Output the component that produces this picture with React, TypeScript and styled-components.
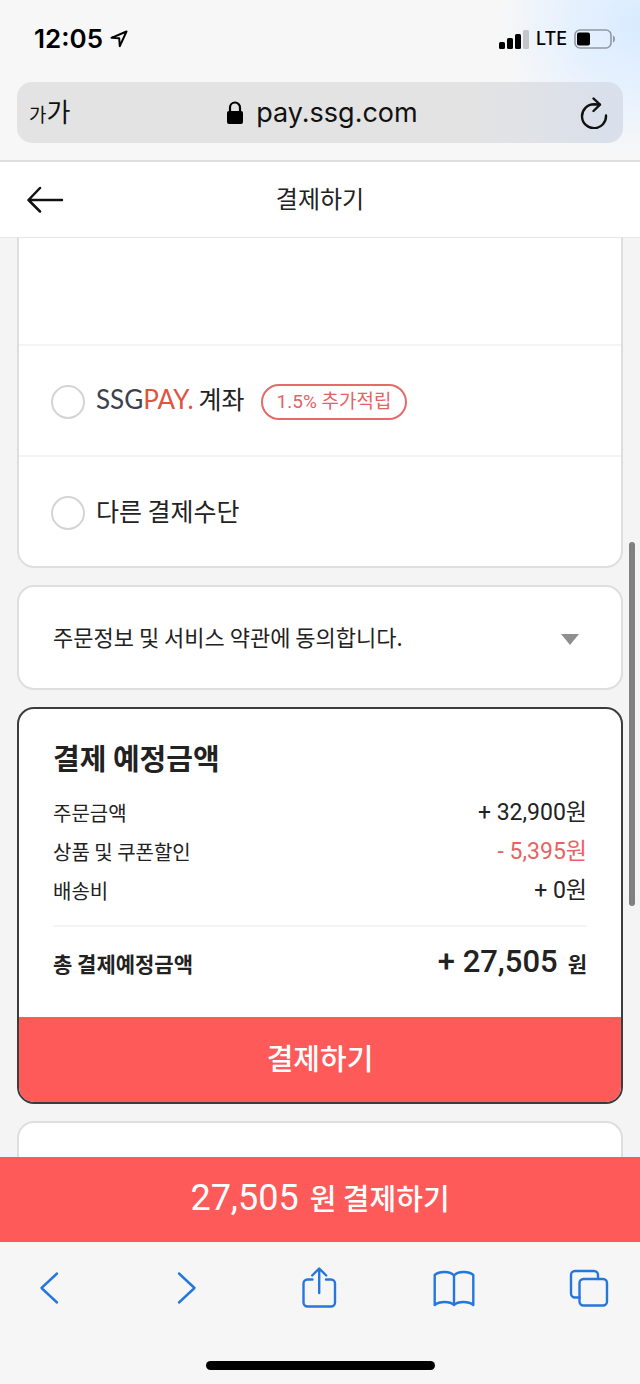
import React from "react";
import styled, { createGlobalStyle } from "styled-components";

const korean = `Roboto, "Noto Sans CJK KR", sans-serif`;
const hangul = `"Noto Sans CJK KR", sans-serif`;
const system = `Inter, "Noto Sans CJK KR", sans-serif`;
const coral = "#ff5a5a";
const ink = "#222";

const GlobalStyle = createGlobalStyle`
  *, *::before, *::after { box-sizing: border-box; }
  body { margin: 0; background: #f4f4f4; }
  button { border: 0; padding: 0; background: none; color: inherit; font: inherit; cursor: pointer; }
  svg { display: block; flex: none; }
  h1, h2, dl, dd, dt, ul { margin: 0; padding: 0; }
`;

const Screen = styled.div`
  min-height: 100vh;
  display: flex;
  flex-direction: column;
  color: ${ink};
  font-family: ${hangul};
`;

const BrowserTop = styled.div`
  display: flex;
  flex-direction: column;
  padding-bottom: 17px;
  border-bottom: 2px solid #dfdfdf;
  background: radial-gradient(ellipse 140px 130px at 100% 24px, #d9ebff 0%, #e6f1fe 50%, #f7f7f7 100%);
`;

const StatusBar = styled.div`
  height: 82px;
  display: flex;
  align-items: center;
  justify-content: space-between;
  padding: 0 24px 4px 34px;
  color: #000;
  font-family: ${system};
`;

const StatusGroup = styled.div`
  display: flex;
  align-items: center;
  gap: 7px;
`;

const Clock = styled.time`
  font-size: 26px;
  font-weight: 600;
  line-height: 30px;
`;

const Network = styled.span`
  font-size: 18px;
  font-weight: 500;
  line-height: 24px;
`;

const AddressBar = styled.div`
  height: 61px;
  margin: 0 17px;
  padding: 0 15px 0 12px;
  display: grid;
  grid-template-columns: 50px 1fr 42px;
  align-items: center;
  border-radius: 15px;
  background: linear-gradient(90deg, #e3e3e3 75%, #d9e0ec 100%);
  color: #111;
  font-family: ${system};
`;

const TextSizeButton = styled.button`
  display: flex;
  align-items: baseline;
  line-height: 32px;
`;

const SizeSample = styled.span<{ $large?: boolean }>`
  font-family: ${hangul};
  font-size: ${(p) => (p.$large ? 26 : 19)}px;
`;

const UrlButton = styled.button`
  display: flex;
  align-items: center;
  justify-content: center;
  gap: 13px;
  font-size: 27px;
  line-height: 34px;
`;

const ReloadButton = styled.button`
  justify-self: end;
`;

const PageHeader = styled.header`
  height: 76px;
  padding: 0 26px 2px;
  display: grid;
  grid-template-columns: 40px 1fr 40px;
  align-items: center;
  background: #fff;
  border-bottom: 1px solid #e6e6e6;
`;

const PageTitle = styled.h1`
  padding-bottom: 2px;
  font-size: 24px;
  font-weight: 400;
  line-height: 36px;
  text-align: center;
`;

const Content = styled.main`
  position: relative;
  flex: 1;
  display: flex;
  flex-direction: column;
  gap: 17px;
  padding: 0 17px;
  background: #f4f4f4;
`;

const Card = styled.section<{ $edge?: "top" | "bottom"; $strong?: boolean }>`
  overflow: hidden;
  background: #fff;
  border: 2px solid ${(p) => (p.$strong ? "#3c3c3c" : "#dedede")};
  border-radius: 17px;
  ${(p) => p.$edge === "top" && "border-top: 0; border-top-left-radius: 0; border-top-right-radius: 0; padding-top: 106px;"}
  ${(p) => p.$edge === "bottom" && "border-bottom: 0; border-bottom-left-radius: 0; border-bottom-right-radius: 0; flex: 1; min-height: 34px;"}
`;

const Method = styled.label`
  height: 111px;
  padding: 2px 32px 0;
  display: flex;
  align-items: center;
  border-top: 2px solid #f4f4f4;
  font-size: 25px;
  line-height: 36px;
  cursor: pointer;
`;

const Radio = styled.input`
  appearance: none;
  width: 34px;
  height: 34px;
  margin: 0 11px 0 0;
  border: 2px solid #d4d4d4;
  border-radius: 50%;
  background: #fff;
  &:checked { border: 10px solid ${coral}; }
`;

const MethodName = styled.span`
  display: flex;
  align-items: baseline;
  gap: 5px;
  padding-bottom: 6px;
`;

const Wordmark = styled.span`
  font-family: Lato, sans-serif;
  font-size: 26px;
  color: #3d404d;
`;

const WordmarkAccent = styled.span`
  color: #dc5540;
`;

const Badge = styled.span`
  height: 36px;
  margin-left: 16px;
  padding: 0 14px;
  display: flex;
  align-items: center;
  border: 2px solid #e56a6a;
  border-radius: 18px;
  color: #e56262;
  font-family: ${korean};
  font-size: 19px;
`;

const TermsToggle = styled.button`
  width: 100%;
  height: 101px;
  padding: 3px 42px 0 34px;
  display: flex;
  align-items: center;
  justify-content: space-between;
  font-size: 22px;
  line-height: 32px;
`;

const TermsText = styled.span`
  padding-bottom: 7px;
`;

const Summary = styled.div`
  padding: 28px 34px 36px;
`;

const SummaryTitle = styled.h2`
  margin-bottom: 16px;
  font-size: 29px;
  font-weight: 700;
  line-height: 40px;
`;

const AmountRow = styled.div<{ $discount?: boolean }>`
  display: flex;
  align-items: center;
  justify-content: space-between;
  line-height: 39px;
  font-size: 20px;
  dd {
    font-family: ${korean};
    font-size: 23px;
    color: ${(p) => (p.$discount ? "#ea6262" : ink)};
  }
`;

const TotalRow = styled.div`
  margin-top: 15px;
  padding-top: 17px;
  display: flex;
  align-items: center;
  justify-content: space-between;
  border-top: 2px solid #f4f4f4;
  font-size: 21px;
  font-weight: 700;
  line-height: 36px;
`;

const Total = styled.dd`
  display: flex;
  align-items: baseline;
  gap: 10px;
`;

const Figure = styled.span<{ $size: number; $weight: number }>`
  font-family: ${korean};
  font-size: ${(p) => p.$size}px;
  font-weight: ${(p) => p.$weight};
`;

const PayButton = styled.button`
  width: 100%;
  height: 85px;
  padding-bottom: 6px;
  display: flex;
  align-items: center;
  justify-content: center;
  background: ${coral};
  color: #fff;
  font-size: 29px;
  font-weight: 500;
`;

const StickyPayButton = styled(PayButton)`
  padding-bottom: 4px;
  align-items: baseline;
  gap: 11px;
  line-height: 81px;
`;

const ScrollThumb = styled.div`
  position: absolute;
  top: 304px;
  right: 5px;
  width: 6px;
  height: 364px;
  border-radius: 3px;
  background: #808080;
`;

const BrowserBottom = styled.footer`
  background: #f6f6f6;
`;

const Toolbar = styled.nav`
  height: 92px;
  padding: 0 31px 0 29px;
  display: flex;
  align-items: center;
  justify-content: space-between;
`;

const HomeIndicator = styled.div`
  width: 229px;
  height: 9px;
  margin: 27px auto 14px;
  border-radius: 5px;
  background: #000;
`;

const blue = {
  fill: "none",
  stroke: "#2577dd",
  strokeWidth: 2.4,
  strokeLinecap: "round" as const,
  strokeLinejoin: "round" as const,
};

const methods = [
  { id: "account", ssg: true, name: "계좌", badge: "1.5% 추가적립" },
  { id: "other", ssg: false, name: "다른 결제수단", badge: "" },
];

const amounts = [
  { label: "주문금액", value: "+ 32,900원" },
  { label: "상품 및 쿠폰할인", value: "- 5,395원", discount: true },
  { label: "배송비", value: "+ 0원" },
];

export default function App() {
  return (
    <Screen>
      <GlobalStyle />
      <BrowserTop>
        <StatusBar>
          <StatusGroup>
            <Clock>12:05</Clock>
            <svg width="18" height="18" viewBox="0 0 18 18" fill="none" stroke="#000" strokeWidth="2" strokeLinejoin="round">
              <path d="M1.5 7.800 16.500 1.500 9.800 16.200 9.200 8.200Z" />
            </svg>
          </StatusGroup>
          <StatusGroup>
            <svg width="30" height="19" viewBox="0 0 30 19">
              <rect x="0" y="12" width="6" height="7" rx="1.5" />
              <rect x="8" y="8" width="6" height="11" rx="1.5" />
              <rect x="16" y="4" width="6" height="15" rx="1.5" />
              <rect x="24" y="0" width="6" height="19" rx="1.5" fill="#c4c5c8" />
            </svg>
            <Network>LTE</Network>
            <svg width="42" height="20" viewBox="0 0 42 20">
              <rect x="1" y="1" width="36" height="18" rx="5" fill="none" stroke="#9298a0" strokeWidth="1.6" />
              <rect x="3" y="3.5" width="13" height="13" rx="2" />
              <path d="M39 6.5c2.6.8 2.6 6.200 0 7Z" fill="#9298a0" />
            </svg>
          </StatusGroup>
        </StatusBar>
        <AddressBar>
          <TextSizeButton aria-label="텍스트 크기">
            <SizeSample>가</SizeSample>
            <SizeSample $large>가</SizeSample>
          </TextSizeButton>
          <UrlButton>
            <svg width="16" height="24" viewBox="0 0 16 24">
              <rect x="0" y="10" width="16" height="13" rx="2" />
              <path d="M3 11V6.500a5 5 0 0 1 10 0V11" fill="none" stroke="#000" strokeWidth="2.200" />
            </svg>
            pay.ssg.com
          </UrlButton>
          <ReloadButton aria-label="새로고침">
            <svg width="28" height="32" viewBox="0 0 28 32" fill="none" stroke="#111" strokeWidth="2.400" strokeLinecap="round" strokeLinejoin="round">
              <path d="M26 18.500A12 12 0 1 1 14 7.200L19.500 7.500" />
              <path d="M13.500 1.500 20 7.700 13.500 14" />
            </svg>
          </ReloadButton>
        </AddressBar>
      </BrowserTop>

      <PageHeader>
        <button aria-label="뒤로">
          <svg width="38" height="28" viewBox="0 0 38 28" fill="none" stroke="#111" strokeWidth="2.500" strokeLinecap="round" strokeLinejoin="round">
            <path d="M14 3 2.500 15 14 26.500M2.500 15H36" />
          </svg>
        </button>
        <PageTitle>결제하기</PageTitle>
      </PageHeader>

      <Content>
        <Card $edge="top">
          {methods.map((m) => (
            <Method key={m.id}>
              <Radio type="radio" name="method" value={m.id} />
              <MethodName>
                {m.ssg && (
                  <Wordmark>
                    SSG<WordmarkAccent>PAY.</WordmarkAccent>
                  </Wordmark>
                )}
                <span>{m.name}</span>
              </MethodName>
              {m.badge && <Badge>{m.badge}</Badge>}
            </Method>
          ))}
        </Card>

        <Card>
          <TermsToggle aria-expanded={false}>
            <TermsText>주문정보 및 서비스 약관에 동의합니다.</TermsText>
            <svg width="18" height="11" viewBox="0 0 18 11">
              <path d="M0 0H18L9 11Z" fill="#8f8f8f" />
            </svg>
          </TermsToggle>
        </Card>

        <Card $strong>
          <Summary>
            <SummaryTitle>결제 예정금액</SummaryTitle>
            <dl>
              {amounts.map((a) => (
                <AmountRow key={a.label} $discount={a.discount}>
                  <dt>{a.label}</dt>
                  <dd>{a.value}</dd>
                </AmountRow>
              ))}
              <TotalRow>
                <dt>총 결제예정금액</dt>
                <Total>
                  <Figure $size={31} $weight={500}>+ 27,505</Figure>
                  <span>원</span>
                </Total>
              </TotalRow>
            </dl>
          </Summary>
          <PayButton>결제하기</PayButton>
        </Card>

        <Card $edge="bottom" />
        <ScrollThumb />
      </Content>

      <StickyPayButton>
        <Figure $size={36} $weight={400}>27,505</Figure>
        <span>원 결제하기</span>
      </StickyPayButton>

      <BrowserBottom>
        <Toolbar>
          <button aria-label="이전">
            <svg width="40" height="42" viewBox="0 0 40 42" {...blue}>
              <path d="M28 6.500 12.500 21 28 35.500" />
            </svg>
          </button>
          <button aria-label="다음">
            <svg width="40" height="42" viewBox="0 0 40 42" {...blue}>
              <path d="M15 6.500 30.500 21 15 35.500" />
            </svg>
          </button>
          <button aria-label="공유">
            <svg width="40" height="42" viewBox="0 0 40 42" {...blue}>
              <path d="M14.500 12.500H9.500a4 4 0 0 0-4 4V35.500a4 4 0 0 0 4 4H33a4 4 0 0 0 4-4V16.500a4 4 0 0 0-4-4H28" />
              <path d="M21.200 26V2M14.200 8.500 21.200 1.500 28.200 8.500" />
            </svg>
          </button>
          <button aria-label="책갈피">
            <svg width="42" height="42" viewBox="0 0 42 42" {...blue}>
              <path d="M21 8.500C17 4 6.500 4 1.700 8V38C6.500 34 17 34 21 38C25 34 35.500 34 40.300 38V8C35.500 4 25 4 21 8.500ZM21 8.500V38" />
            </svg>
          </button>
          <button aria-label="탭">
            <svg width="40" height="42" viewBox="0 0 40 42" {...blue}>
              <rect x="10.500" y="12" width="27.500" height="26.500" rx="4" />
              <path d="M10.500 30.500H6a4 4 0 0 1-4-4V8a4 4 0 0 1 4-4H25a4 4 0 0 1 4 4V12" />
            </svg>
          </button>
        </Toolbar>
        <HomeIndicator />
      </BrowserBottom>
    </Screen>
  );
}
